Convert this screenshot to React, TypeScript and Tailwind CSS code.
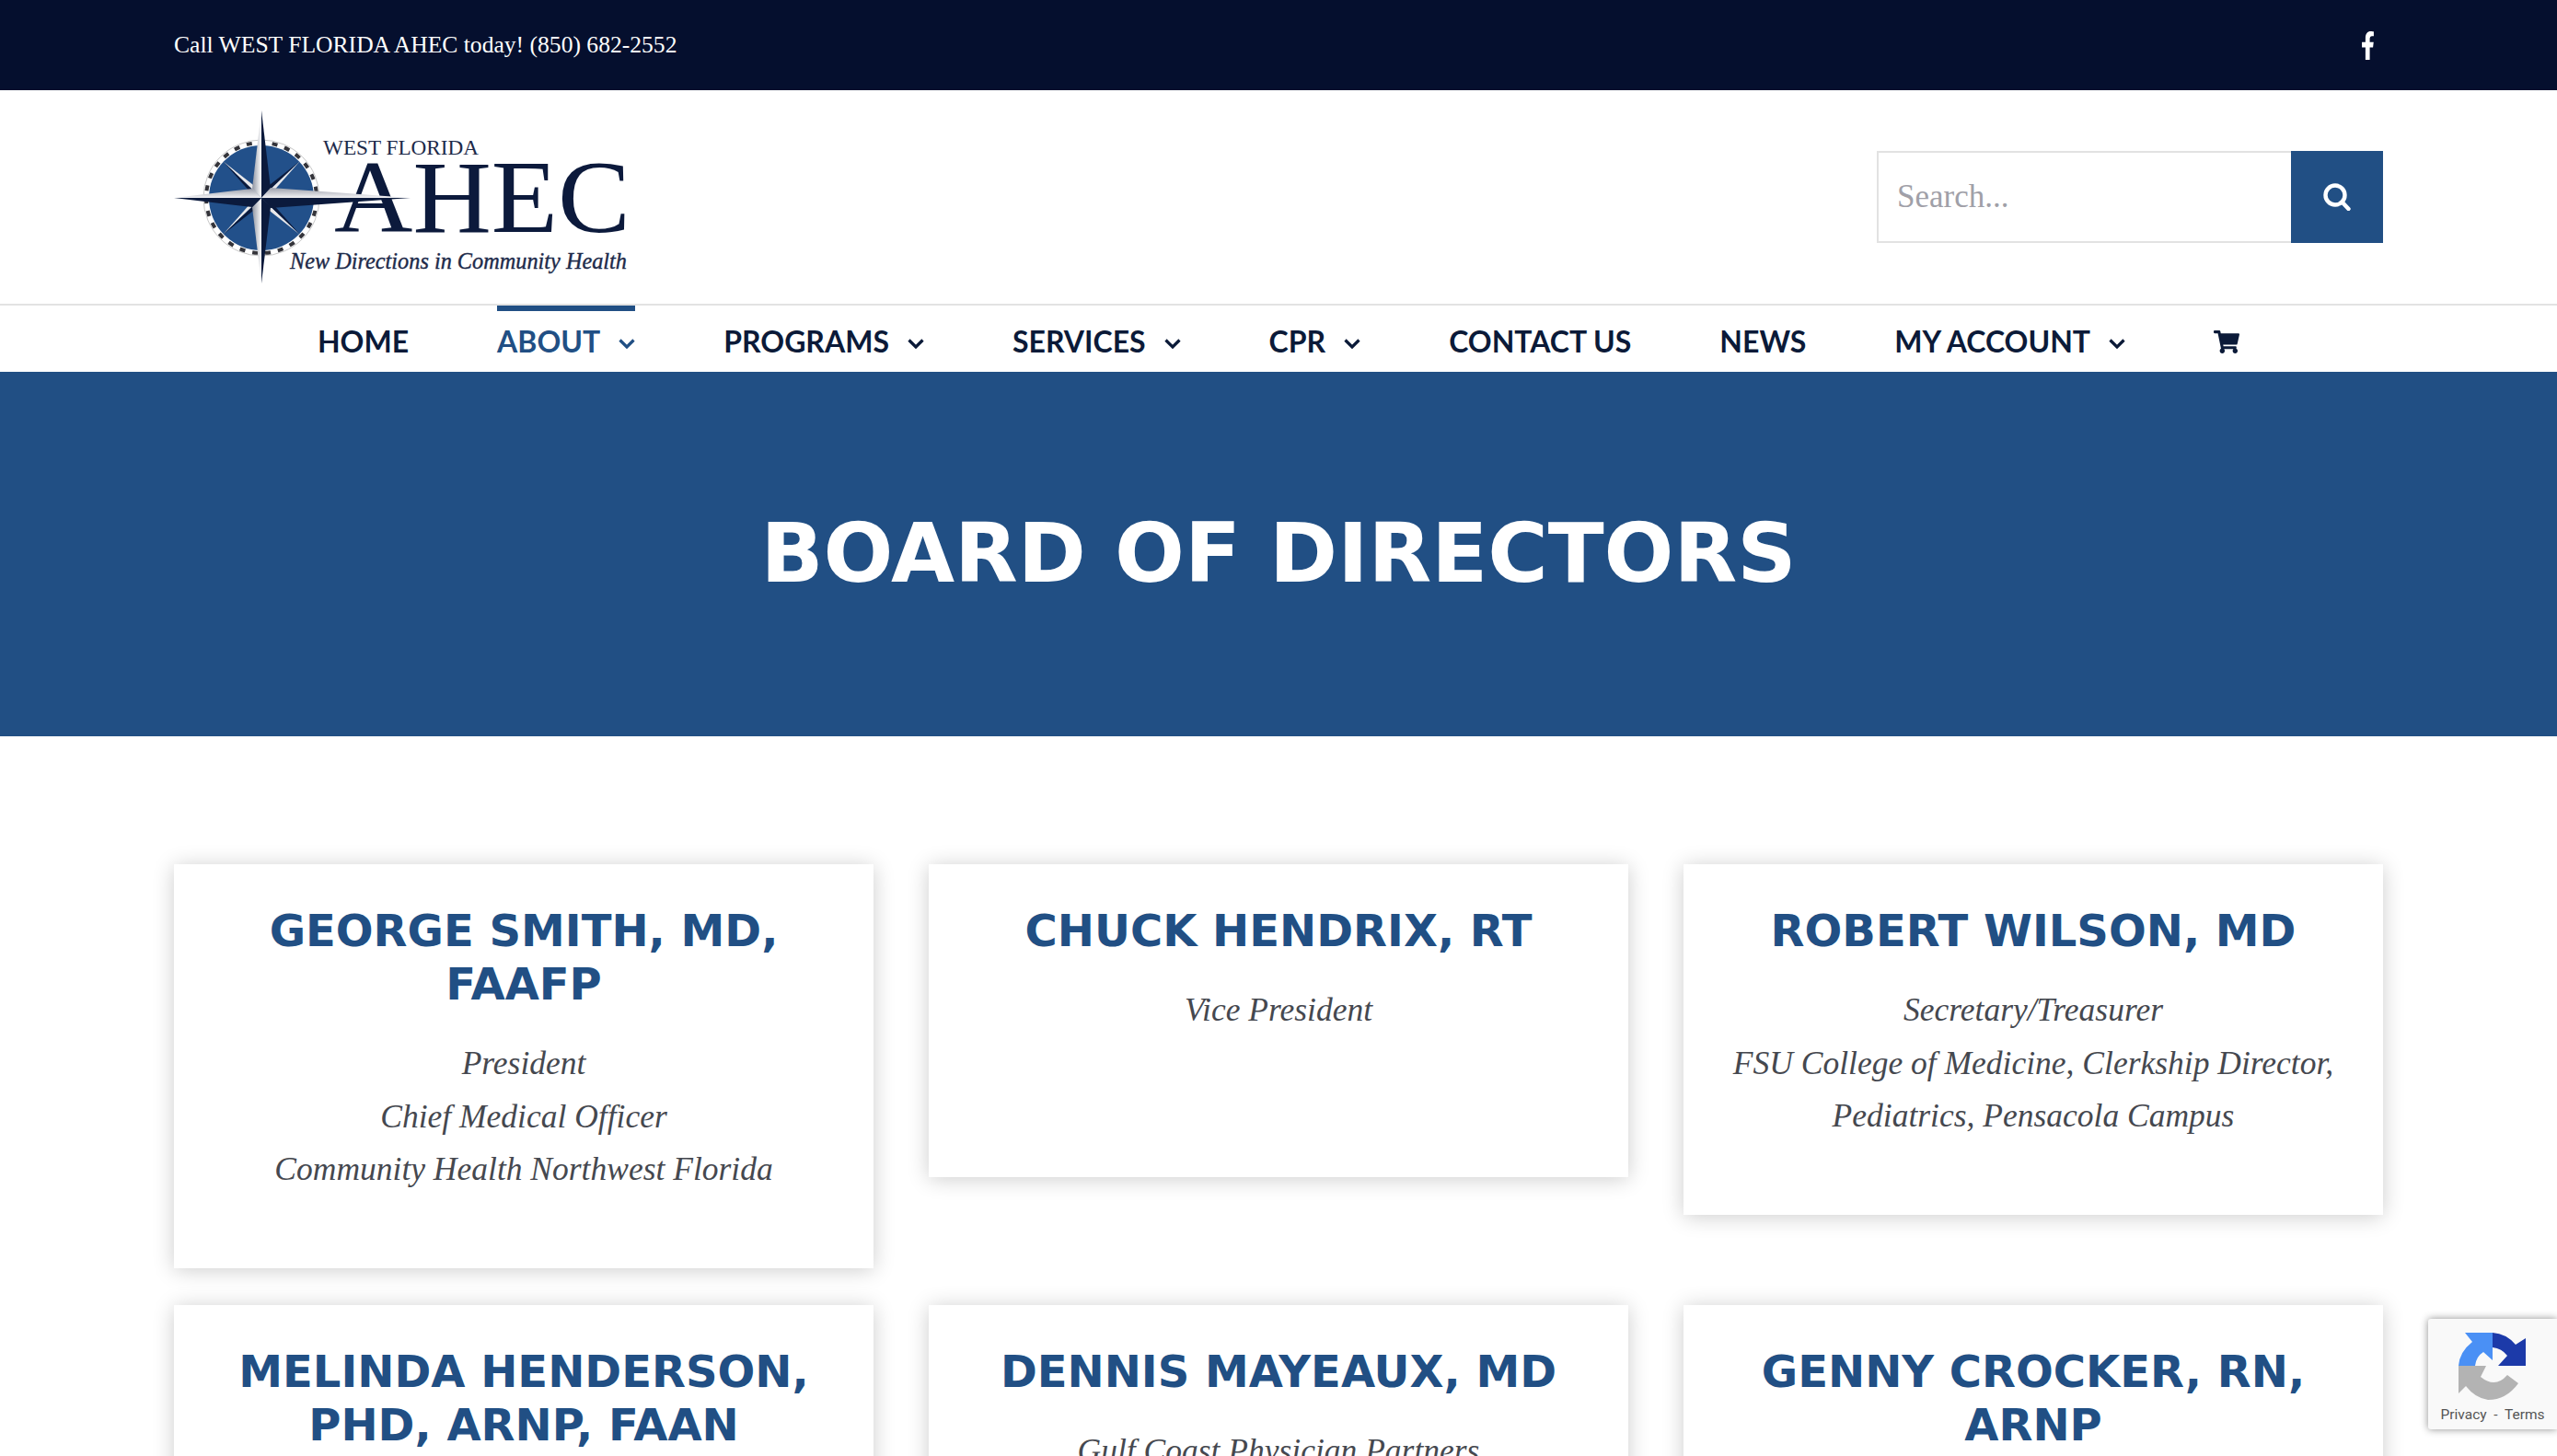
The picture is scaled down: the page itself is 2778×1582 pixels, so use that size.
import { FaFacebookF, FaShoppingCart } from 'react-icons/fa';

interface Member {
  name: string;
  lines: string[];
  minH?: string;
}

const members: Member[] = [
  { name: 'GEORGE SMITH, MD, FAAFP', lines: ['President', 'Chief Medical Officer', 'Community Health Northwest Florida'] },
  { name: 'CHUCK HENDRIX, RT', lines: ['Vice President'], minH: 'min-h-[340px]' },
  {
    name: 'ROBERT WILSON, MD',
    lines: ['Secretary/Treasurer', 'FSU College of Medicine, Clerkship Director, Pediatrics, Pensacola Campus'],
  },
  { name: 'MELINDA HENDERSON, PHD, ARNP, FAAN', lines: [] },
  { name: 'DENNIS MAYEAUX, MD', lines: ['Gulf Coast Physician Partners'] },
  { name: 'GENNY CROCKER, RN, ARNP', lines: [] },
];

const navItems = [
  { label: 'HOME' },
  { label: 'ABOUT', caret: true, active: true },
  { label: 'PROGRAMS', caret: true },
  { label: 'SERVICES', caret: true },
  { label: 'CPR', caret: true },
  { label: 'CONTACT US' },
  { label: 'NEWS' },
  { label: 'MY ACCOUNT', caret: true },
];

function Caret() {
  return (
    <svg width="18" height="11" viewBox="0 0 18 11" className="ml-[20px] mt-[4px]" fill="none" stroke="currentColor" strokeWidth="3.2">
      <path d="M1.5 1.5 L9 9 L16.5 1.5" />
    </svg>
  );
}

function Logo() {
  return (
    <svg width="500" height="192" viewBox="0 0 500 192" className="mt-[4px] block">
      <defs>
        <linearGradient id="sheenV" x1="0" y1="0" x2="1" y2="0">
          <stop offset="0" stopColor="#8e93a0" />
          <stop offset="1" stopColor="#ffffff" />
        </linearGradient>
        <linearGradient id="sheenH" x1="0" y1="0" x2="0" y2="1">
          <stop offset="0" stopColor="#9a9eaa" />
          <stop offset="1" stopColor="#f4f4f6" />
        </linearGradient>
      </defs>
      <circle cx="95" cy="95" r="63" fill="#ffffff" stroke="#c8c8c8" strokeWidth="1" />
      <circle cx="95" cy="95" r="60" fill="none" stroke="#34343a" strokeWidth="4" strokeDasharray="6 8" />
      <circle cx="95" cy="95" r="57" fill="#22508a" />
      {/* diagonal points */}
      <path d="M95 95 L53 55 L84 90 Z" fill="#0b1a3c" />
      <path d="M95 95 L53 55 L90 84 Z" fill="#e8e8ea" />
      <path d="M95 95 L137 55 L100 84 Z" fill="#0b1a3c" />
      <path d="M95 95 L137 55 L106 90 Z" fill="#e8e8ea" />
      <path d="M95 95 L53 135 L84 100 Z" fill="#e8e8ea" />
      <path d="M95 95 L53 135 L90 106 Z" fill="#0b1a3c" />
      <path d="M95 95 L137 135 L100 106 Z" fill="#e8e8ea" />
      <path d="M95 95 L137 135 L106 100 Z" fill="#0b1a3c" />
      <text x="162" y="48" fontFamily="'Liberation Serif', serif" fontSize="23" fill="#1d2a4a" textLength="169" lengthAdjust="spacingAndGlyphs">
        WEST FLORIDA
      </text>
      <text x="174" y="132" fontFamily="'Liberation Serif', serif" fontSize="112" fill="#0c1a3c" textLength="322" lengthAdjust="spacingAndGlyphs">
        AHEC
      </text>
      {/* long points sit over the A */}
      <path d="M95 0 L85 85 L95 95 Z" fill="url(#sheenV)" />
      <path d="M95 0 L105 85 L95 95 Z" fill="#0b1a3c" />
      <path d="M95 188 L85 105 L95 95 Z" fill="url(#sheenV)" />
      <path d="M95 188 L105 105 L95 95 Z" fill="#0b1a3c" />
      <path d="M0 95 L85 85 L95 95 Z" fill="url(#sheenH)" />
      <path d="M0 95 L85 105 L95 95 Z" fill="#0b1a3c" />
      <path d="M257 95 L105 84 L95 95 Z" fill="url(#sheenH)" />
      <path d="M257 95 L105 106 L95 95 Z" fill="#0b1a3c" />
      <text x="126" y="172" fontFamily="'Liberation Serif', serif" fontStyle="italic" fontSize="26" fill="#1d2a4a" stroke="#1d2a4a" strokeWidth="0.4" textLength="366" lengthAdjust="spacingAndGlyphs">
        New Directions in Community Health
      </text>
    </svg>
  );
}

function SearchGlyph() {
  return (
    <svg width="30" height="30" viewBox="0 0 30 30" fill="none" stroke="#ffffff" strokeWidth="4.4" strokeLinecap="round">
      <circle cx="13" cy="13" r="10.5" />
      <path d="M20.5 20.5 L27.5 28" />
    </svg>
  );
}

function RecaptchaMark() {
  return (
    <svg width="74" height="75" viewBox="0 0 74 75">
      <path d="M0 37 Q1 22 15 11 L7 1 L37 1 L37 31 L27 22 Q19 27 18 37 Z" fill="#4a90f5" />
      <path d="M37 1 Q52 2 62 14 L73 7 L73 37 L43 37 L53 26 Q47 18 37 17 Z" fill="#1c3aa9" />
      <path d="M0 37 L30 37 L24 49 Q40 62 53 47 L65 56 Q52 74 32 74 Q18 72 8 59 L0 67 Z" fill="#b3b3b3" />
    </svg>
  );
}

function BoardCard({ name, lines, minH }: Member) {
  return (
    <div className={`bg-white px-[40px] pt-[43px] pb-[78px] text-center shadow-[0_2px_22px_rgba(0,0,0,0.2)] ${minH ?? ''}`}>
      <h2 className="font-['DejaVu_Sans',sans-serif] text-[48px] font-bold leading-[58px] text-[#214f84]">{name}</h2>
      <div className="mt-[29px] font-['Liberation_Serif',serif] text-[35.5px] italic leading-[57.6px] text-[#45484f]">
        {lines.map((line) => (
          <p key={line}>{line}</p>
        ))}
      </div>
    </div>
  );
}

export default function App() {
  return (
    <div className="relative h-[1582px] overflow-hidden bg-white">
      <div className="bg-[#050f2e]">
        <div className="mx-auto flex h-[98px] w-[2400px] items-center justify-between">
          <p className="font-['Liberation_Serif',serif] text-[25.6px] text-white">Call WEST FLORIDA AHEC today! (850) 682-2552</p>
          <FaFacebookF className="mr-[9px] h-[31px] w-[15px] text-white" preserveAspectRatio="none" />
        </div>
      </div>

      <header className="border-b-2 border-[#e2e2e2]">
        <div className="mx-auto flex h-[232px] w-[2400px] items-center justify-between">
          <Logo />
          <div className="flex h-[100px] w-[550px]">
            <input
              placeholder="Search..."
              className="h-full min-w-0 flex-1 border-2 border-r-0 border-[#e2e2e2] px-[20px] font-['Liberation_Serif',serif] text-[35px] placeholder:text-[#a0a0a8]"
            />
            <button className="flex h-full w-[100px] items-center justify-center bg-[#214f84]">
              <SearchGlyph />
            </button>
          </div>
        </div>
      </header>

      <nav className="flex h-[72px] items-stretch justify-center gap-[96px] font-['Liberation_Sans_Narrow','Lato',sans-serif] text-[32px] font-bold text-[#0b1a38]">
        {navItems.map((item) => (
          <a
            key={item.label}
            className={`flex items-center border-t-[6px] ${item.active ? 'border-[#214f84] text-[#214f84]' : 'border-transparent'}`}
          >
            {item.label}
            {item.caret && <Caret />}
          </a>
        ))}
        <a className="flex items-center border-t-[6px] border-transparent">
          <FaShoppingCart className="h-[25px] w-[28px]" />
        </a>
      </nav>

      <section className="flex h-[396px] items-center justify-center bg-[#214f84]">
        <h1 className="font-['DejaVu_Sans',sans-serif] text-[89.3px] font-bold text-white">BOARD OF DIRECTORS</h1>
      </section>

      <main className="mx-auto grid w-[2400px] grid-cols-3 items-start gap-x-[60px] gap-y-[40px] pt-[139px]">
        {members.map((member) => (
          <BoardCard key={member.name} {...member} />
        ))}
      </main>

      <div className="absolute right-0 top-[1433px] flex h-[120px] w-[140px] flex-col items-center rounded-l-[3px] bg-[#f9f9f9] pt-[14px] shadow-[0_0_8px_rgba(0,0,0,0.45)]">
        <RecaptchaMark />
        <p className="mt-[5px] whitespace-pre font-['Roboto',sans-serif] text-[15.5px] leading-[20px] text-[#555]">Privacy  -  Terms</p>
      </div>
    </div>
  );
}
